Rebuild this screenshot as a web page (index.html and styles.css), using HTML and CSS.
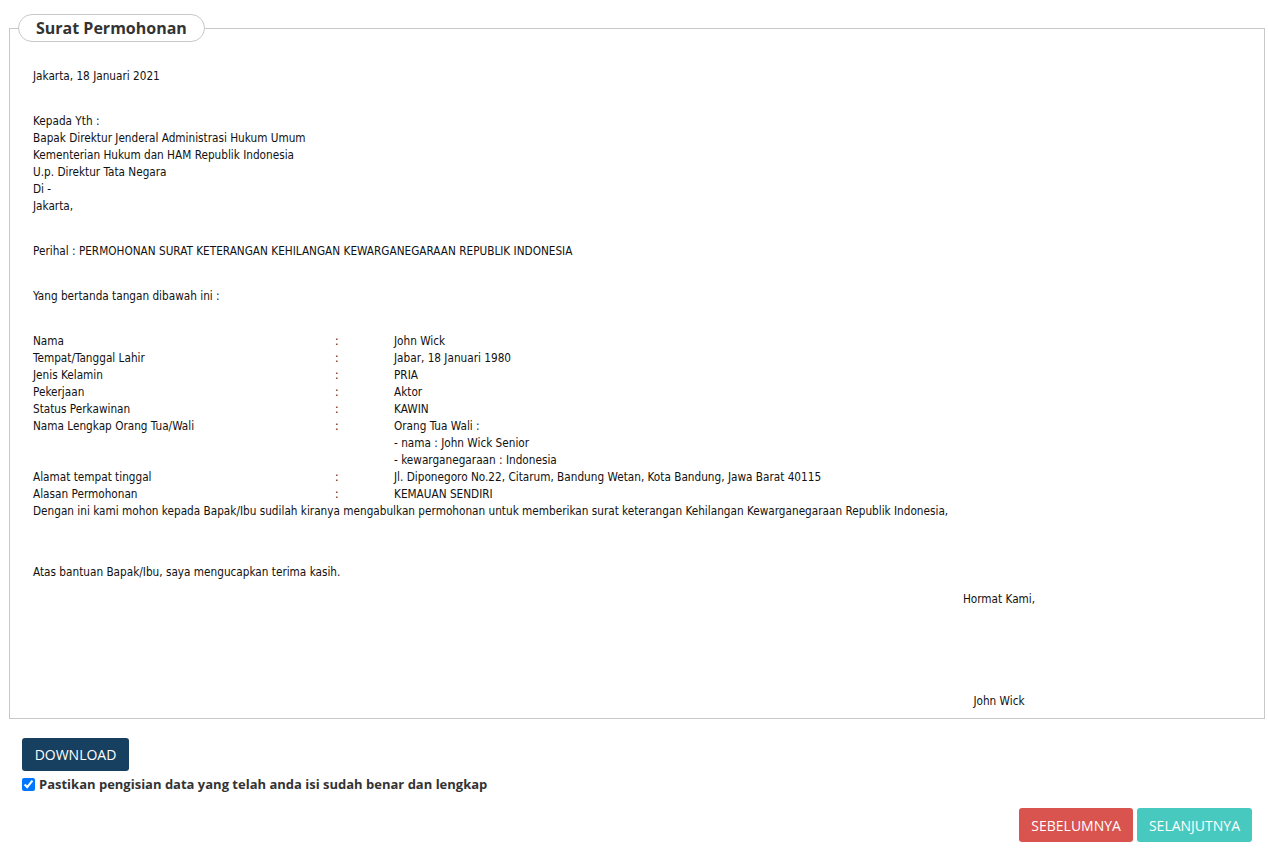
FILE: index.html
```html
<!DOCTYPE html>
<html lang="id">
<head>
  <meta charset="UTF-8">
  <title>Surat Permohonan</title>
  <link rel="stylesheet" href="styles.css">
</head>
<body>
  <div class="page">
    <fieldset class="surat">
      <legend>Surat Permohonan</legend>
      <div class="isi">
        <p class="tanggal">Jakarta, 18 Januari 2021</p>

        <p class="blok">
          Kepada Yth :<br>
          Bapak Direktur Jenderal Administrasi Hukum Umum<br>
          Kementerian Hukum dan HAM Republik Indonesia<br>
          U.p. Direktur Tata Negara<br>
          Di -<br>
          Jakarta,
        </p>

        <p class="blok">Perihal : PERMOHONAN SURAT KETERANGAN KEHILANGAN KEWARGANEGARAAN REPUBLIK INDONESIA</p>

        <p class="blok">Yang bertanda tangan dibawah ini :</p>

        <table class="data">
          <tr><td class="label">Nama</td><td class="titik">:</td><td>John Wick</td></tr>
          <tr><td class="label">Tempat/Tanggal Lahir</td><td class="titik">:</td><td>Jabar, 18 Januari 1980</td></tr>
          <tr><td class="label">Jenis Kelamin</td><td class="titik">:</td><td>PRIA</td></tr>
          <tr><td class="label">Pekerjaan</td><td class="titik">:</td><td>Aktor</td></tr>
          <tr><td class="label">Status Perkawinan</td><td class="titik">:</td><td>KAWIN</td></tr>
          <tr>
            <td class="label">Nama Lengkap Orang Tua/Wali</td><td class="titik">:</td>
            <td>Orang Tua Wali :<br>- nama : John Wick Senior<br>- kewarganegaraan : Indonesia</td>
          </tr>
          <tr><td class="label">Alamat tempat tinggal</td><td class="titik">:</td><td>Jl. Diponegoro No.22, Citarum, Bandung Wetan, Kota Bandung, Jawa Barat 40115</td></tr>
          <tr><td class="label">Alasan Permohonan</td><td class="titik">:</td><td>KEMAUAN SENDIRI</td></tr>
        </table>
        <p>Dengan ini kami mohon kepada Bapak/Ibu sudilah kiranya mengabulkan permohonan untuk memberikan surat keterangan Kehilangan Kewarganegaraan Republik Indonesia,</p>

        <p class="penutup">Atas bantuan Bapak/Ibu, saya mengucapkan terima kasih.</p>

        <div class="ttd">
          <p>Hormat Kami,</p>
          <p class="nama-ttd">John Wick</p>
        </div>
      </div>
    </fieldset>

    <div class="aksi">
      <button class="btn btn-download">DOWNLOAD</button>
      <label class="cek">
        <input type="checkbox" checked>
        <span>Pastikan pengisian data yang telah anda isi sudah benar dan lengkap</span>
      </label>
    </div>

    <div class="navigasi">
      <button class="btn btn-prev">SEBELUMNYA</button>
      <button class="btn btn-next">SELANJUTNYA</button>
    </div>
  </div>
</body>
</html>
```

FILE: styles.css
```css
* {
  box-sizing: border-box;
}
body {
  margin: 0;
  background: #fff;
  font-family: "Open Sans", "Noto Sans", sans-serif;
  color: #222;
}
.page {
  padding: 14px 3px 0 9px;
}
.surat {
  margin: 0;
  padding: 0 0 8px 8px;
  border: 1px solid #c8c8c8;
}
.surat legend {
  padding: 0 17px;
  height: 28px;
  line-height: 26px;
  border: 1px solid #c8c8c8;
  border-radius: 14px;
  font-size: 16px;
  font-weight: 700;
  color: #333;
}
.surat .isi {
  padding: 26px 15px 0 15px;
  font-family: "DejaVu Sans Condensed", "DejaVu Sans", sans-serif;
  font-size: 11.7px;
  line-height: 17px;
  color: #111;
}
.isi p {
  margin: 0;
}
.isi .blok {
  margin-top: 28px;
}
.data {
  margin-top: 28px;
  border-collapse: collapse;
}
.data td {
  padding: 0;
  vertical-align: top;
}
.data .label {
  width: 302px;
}
.data .titik {
  width: 59px;
}
.isi .penutup {
  margin-top: 44px;
}
.ttd {
  width: 160px;
  margin: 10px 170px 0 auto;
  text-align: center;
}
.ttd .nama-ttd {
  margin-top: 85px;
}
.aksi {
  padding: 19px 0 0 13px;
}
.btn {
  border: 0;
  border-radius: 3px;
  color: #fff;
  font-family: "Open Sans", "Noto Sans", sans-serif;
  font-size: 14px;
  cursor: pointer;
}
.btn-download {
  display: block;
  width: 107px;
  height: 33px;
  padding: 0;
  background: #173f60;
}
.cek {
  display: flex;
  align-items: center;
  gap: 4px;
  margin-top: 4px;
  font-size: 13px;
  font-weight: 700;
  color: #333;
}
.cek input {
  margin: 0;
  width: 13px;
  height: 13px;
}
.navigasi {
  display: flex;
  justify-content: flex-end;
  gap: 4px;
  padding: 15px 13px 0 0;
}
.btn-prev,
.btn-next {
  height: 34px;
  padding: 0 12px;
}
.btn-prev {
  background: #d9534f;
}
.btn-next {
  background: #48c9bf;
}
```
